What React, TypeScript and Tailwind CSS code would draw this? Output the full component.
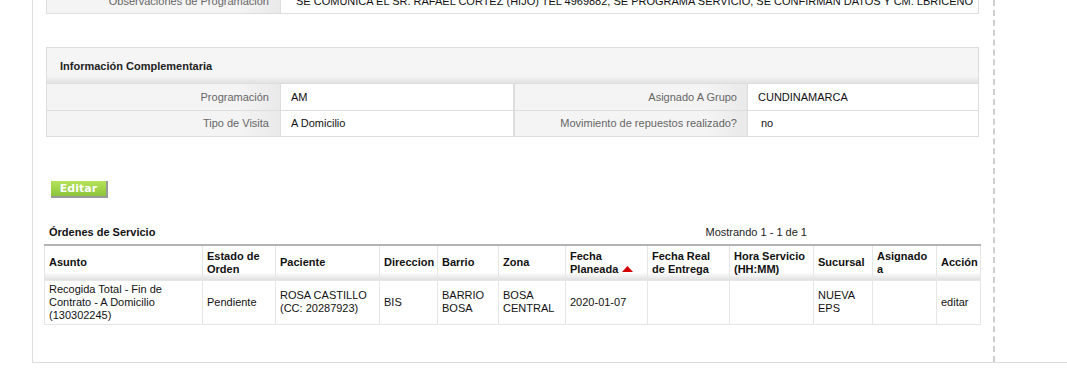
import React from 'react';

const labelBg = 'bg-[linear-gradient(to_right,#f4f4f4_82%,#e9e9e9)]';

const cols = [
    { key: 'asunto', title: 'Asunto', w: 158 },
    { key: 'estado', title: 'Estado de Orden', w: 73 },
    { key: 'paciente', title: 'Paciente', w: 104 },
    { key: 'dir', title: 'Direccion', w: 58 },
    { key: 'barrio', title: 'Barrio', w: 61 },
    { key: 'zona', title: 'Zona', w: 67 },
    { key: 'fecha', title: 'Fecha Planeada', w: 82 },
    { key: 'real', title: 'Fecha Real de Entrega', w: 82 },
    { key: 'hora', title: 'Hora Servicio (HH:MM)', w: 84 },
    { key: 'suc', title: 'Sucursal', w: 59 },
    { key: 'asig', title: 'Asignado a', w: 64 },
    { key: 'acc', title: 'Acción', w: 44 },
];

const row: Record<string, React.ReactNode> = {
    asunto: <>Recogida Total - Fin de<br />Contrato - A Domicilio<br />(130302245)</>,
    estado: 'Pendiente',
    paciente: <>ROSA CASTILLO<br />(CC: 20287923)</>,
    dir: 'BIS',
    barrio: <>BARRIO<br />BOSA</>,
    zona: <>BOSA<br />CENTRAL</>,
    fecha: '2020-01-07',
    real: '',
    hora: '',
    suc: <>NUEVA<br />EPS</>,
    asig: '',
    acc: 'editar',
};

function SortUp() {
    return (
        <svg width="11" height="6" viewBox="0 0 11 6" className="inline-block ml-[4px] mb-[1px]">
            <polygon points="5.5,0 11,6 0,6" fill="#d40000" />
        </svg>
    );
}

export default function App() {
    return (
        <div className="w-[1067px] h-[375px] overflow-hidden bg-white font-['Liberation_Sans',Arial,sans-serif] text-[11px] text-[#111]">
            <div className="ml-[32px] h-[363px] border-l border-b border-[#dcdcdc] flex">
                {/* main content */}
                <div className="w-[960px] pl-[12px] pr-[13px]">
                    {/* top table, cut off by the viewport */}
                    <div className="-mt-[11px] ml-[1px] mr-[1px] flex h-[25px] border border-[#dddddd]">
                        <div className={`w-[233px] flex items-center justify-end pr-[11px] text-[#666] ${labelBg}`}>Observaciones de Programación</div>
                        <div className="flex-1 flex items-center pl-[15px] border-l border-[#dddddd]">
                            SE COMUNICA EL SR. RAFAEL CORTEZ (HIJO) TEL 4969882, SE PROGRAMA SERVICIO, SE CONFIRMAN DATOS Y CM. LBRICEÑO
                        </div>
                    </div>

                    {/* Información Complementaria */}
                    <div className="mt-[33px] ml-[1px] mr-[1px] border border-[#dddddd]">
                        <div className="h-[35px] flex items-center pl-[13px] pt-[1px] font-bold text-[#222] bg-[linear-gradient(to_bottom,#f5f5f5_80%,#e2e2e2)]">
                            Información Complementaria
                        </div>
                        <div className="grid grid-cols-[233px_233px_234px_1fr] border-t border-[#dddddd]">
                            <div className={`h-[27px] flex items-center justify-end pr-[11px] pt-[1px] text-[#666] border-b border-[#dddddd] ${labelBg}`}>Programación</div>
                            <div className="h-[27px] flex items-center pl-[10px] pt-[1px] border-b border-l border-[#dddddd]">AM</div>
                            <div className={`h-[27px] flex items-center justify-end pr-[10px] pt-[1px] text-[#666] border-b border-l-2 border-[#dddddd] ${labelBg}`}>Asignado A Grupo</div>
                            <div className="h-[27px] flex items-center pl-[10px] pt-[1px] border-b border-l border-[#dddddd]">CUNDINAMARCA</div>
                            <div className={`h-[25px] flex items-center justify-end pr-[11px] text-[#666] ${labelBg}`}>Tipo de Visita</div>
                            <div className="h-[25px] flex items-center pl-[10px] border-l border-[#dddddd]">A Domicilio</div>
                            <div className={`h-[25px] flex items-center justify-end pr-[10px] text-[#666] border-l-2 border-[#dddddd] ${labelBg}`}>Movimiento de repuestos realizado?</div>
                            <div className="h-[25px] flex items-center pl-[13px] border-l border-[#dddddd]">no</div>
                        </div>
                    </div>

                    {/* Editar */}
                    <button className="mt-[44px] ml-[6px] w-[57px] h-[17px] flex items-center justify-center font-['DejaVu_Sans',Verdana,sans-serif] font-bold text-[11px] text-white bg-[linear-gradient(to_bottom,#b5e35a,#8cc43a)] border-r-2 border-b-2 border-[#9a9a9a] leading-none">
                        Editar
                    </button>

                    {/* Órdenes de Servicio */}
                    <div className="mt-[28px] flex items-end justify-between pr-[173px] h-[14px]">
                        <div className="pl-[4px] font-bold text-[#111]">Órdenes de Servicio</div>
                        <div className="text-[#222]">Mostrando 1 - 1 de 1</div>
                    </div>

                    <table className="mt-[4px] -ml-[1px] table-fixed border-collapse w-[936px] border-t-2 border-[#b4b4b4]">
                        <colgroup>
                            {cols.map((c) => <col key={c.key} style={{ width: c.w }} />)}
                        </colgroup>
                        <thead>
                            <tr className="h-[35px] bg-[linear-gradient(to_bottom,#ffffff_78%,#e0e0e0)]">
                                {cols.map((c) => (
                                    <th key={c.key} className="text-left font-bold text-[#111] leading-[13px] px-[4px] align-middle border-x border-[#e6e6e6]">
                                        {c.key === 'fecha' ? <>Fecha<br />Planeada<SortUp /></> : c.title}
                                    </th>
                                ))}
                            </tr>
                        </thead>
                        <tbody>
                            <tr className="h-[44px]">
                                {cols.map((c) => (
                                    <td key={c.key} className="px-[4px] leading-[13px] align-middle border border-[#e6e6e6] text-[#111]">
                                        {row[c.key]}
                                    </td>
                                ))}
                            </tr>
                        </tbody>
                    </table>
                </div>

                {/* dashed divider column */}
                <div className="flex-1 border-l-2 border-dashed border-[#cfcfcf]" />
            </div>
        </div>
    );
}
